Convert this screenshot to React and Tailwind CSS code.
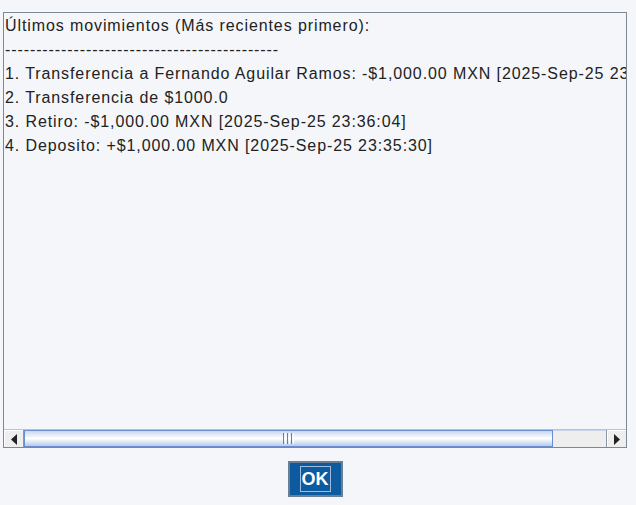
import React from 'react';

const lines = [
  'Últimos movimientos (Más recientes primero):',
  '--------------------------------------------',
  '1. Transferencia a Fernando Aguilar Ramos: -$1,000.00 MXN [2025-Sep-25 23:36:40]',
  '2. Transferencia de $1000.0',
  '3. Retiro: -$1,000.00 MXN [2025-Sep-25 23:36:04]',
  '4. Deposito: +$1,000.00 MXN [2025-Sep-25 23:35:30]',
];

const ArrowButton = ({ dir }) => (
  <div className="w-[19px] h-full bg-[#eeeeee] border-t border-l border-white flex items-center justify-center shrink-0">
    <svg width="6" height="11" viewBox="0 0 6 11">
      {dir === 'left' ? (
        <path d="M6 0 L0 5.5 L6 11 Z" fill="#222" />
      ) : (
        <path d="M0 0 L6 5.5 L0 11 Z" fill="#222" />
      )}
    </svg>
  </div>
);

const App = () => {
  return (
    <div className="w-[636px] h-[505px] bg-[#f4f6fa] pt-[12px] flex flex-col font-['Liberation_Sans',Arial,sans-serif]">
      <div className="pl-[3px]">
        <div className="w-[624px] h-[436px] border border-[#7b8996] flex flex-col bg-[#f4f6fa]">
          {/* text area: the first line runs past the right edge, like the original */}
          <div className="flex-1 overflow-hidden pl-[1px] pt-[1px] text-[16px] leading-[24px] text-[#222222] whitespace-nowrap tracking-[0.9px]">
            {lines.map((line, i) => (
              <div key={i}>{line}</div>
            ))}
          </div>
          <div className="h-[18px] flex border-t border-[#b8c4d4]">
            <div className="border-r border-[#8a97a5] flex">
              <ArrowButton dir="left" />
            </div>
            <div className="w-[529px] h-full border border-[#6b8ed0] bg-gradient-to-b from-[#c9d8ef] via-[#ffffff] to-[#b7cbe9] flex items-center justify-center">
              <div className="flex gap-[1px] h-[11px]">
                <div className="w-[1px] bg-[#5b7fc6]" />
                <div className="w-[1px] bg-white" />
                <div className="w-[1px] bg-[#5b7fc6]" />
                <div className="w-[1px] bg-white" />
                <div className="w-[1px] bg-[#5b7fc6]" />
                <div className="w-[1px] bg-white" />
              </div>
            </div>
            <div className="flex-1 bg-[#eeeeee] border-t border-[#c8d6ea]" />
            <div className="border-l border-[#8a97a5] flex">
              <ArrowButton dir="right" />
            </div>
          </div>
        </div>
      </div>
      <div className="flex justify-center pt-[13px] pr-[6px]">
        <button className="w-[55px] h-[36px] bg-[#0d5a9f] border-2 border-[#6b7f94] flex items-center justify-center">
          <span className="border border-[#9fbbe0] px-[1px] h-[26px] flex items-center text-white font-bold text-[18px] leading-none">
            OK
          </span>
        </button>
      </div>
    </div>
  );
};

export default App;
